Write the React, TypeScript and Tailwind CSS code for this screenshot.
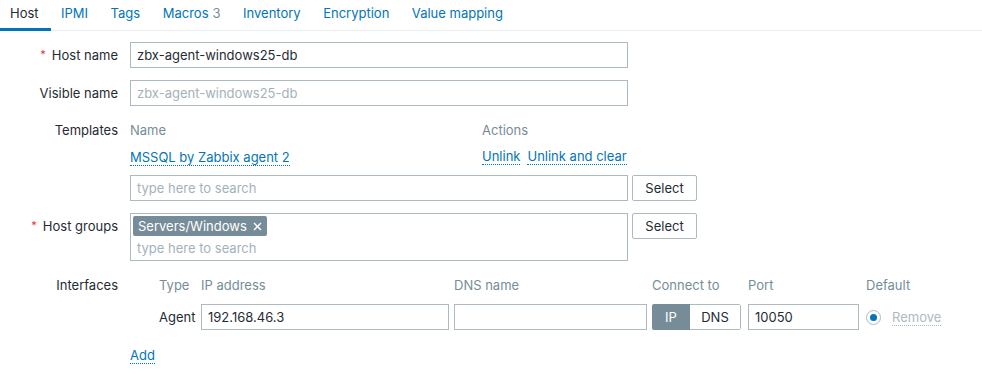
import React from 'react';

// --- couleurs Zabbix ---
// texte #1f2c33, liens #0275b8, en-têtes #768d99, bordures #acbbc2

const tabs = ['Host', 'IPMI', 'Tags', 'Macros', 'Inventory', 'Encryption', 'Value mapping'];

const Label = ({ text, required }: { text: string; required?: boolean }) => (
    <div className="flex justify-end items-start text-right text-[#1f2c33]">
        {required && <span className="text-[#e33734] text-[11px] mr-[6px] leading-[13px] mt-[1px]">*</span>}
        <span>{text}</span>
    </div>
);

const TextInput = ({ value, placeholder, className }: { value?: string; placeholder?: string; className?: string }) => (
    <div className={`h-[26px] border border-[#acbbc2] bg-white flex items-center px-[6px] ${className || ''}`}>
        {value ? <span className="text-[#1f2c33]">{value}</span> : <span className="text-[#a4b2ba]">{placeholder}</span>}
    </div>
);

const SelectBtn = () => (
    <button className="h-[26px] w-[65px] border border-[#acbbc2] rounded-[2px] bg-white text-[#1f2c33] flex items-center justify-center">
        Select
    </button>
);

const Link = ({ children, muted }: { children: React.ReactNode; muted?: boolean }) => (
    <span className={`border-b border-dotted leading-[15px] ${muted ? 'text-[#acbbc2] border-[#acbbc2]' : 'text-[#0275b8] border-[#0275b8]'}`}>
        {children}
    </span>
);

export default function App() {
    return (
        <div className="w-[982px] h-[374px] bg-white text-[13px] leading-[16px] overflow-hidden" style={{ fontFamily: 'Inter, "Noto Sans", sans-serif' }}>
            {/* ONGLETS */}
            <div className="flex h-[31px] border-b border-[#ebeef0]">
                {tabs.map((t, i) => (
                    <div
                        key={t}
                        className={`pl-[10px] pr-[12.5px] pt-[5px] h-[31px] ${i === 0 ? 'text-[#1f2c33] border-b-[3px] border-[#0275b8]' : 'text-[#0275b8]'}`}
                    >
                        {t}
                        {t === 'Macros' && <span className="text-[#768d99] ml-[4px]">3</span>}
                    </div>
                ))}
            </div>

            {/* FORMULAIRE */}
            <div className="grid grid-cols-[118px_1fr] gap-x-[12px] mt-[11px]">
                {/* Host name */}
                <div className="pt-[5px]"><Label text="Host name" required /></div>
                <TextInput value="zbx-agent-windows25-db" className="w-[498px]" />

                {/* Visible name */}
                <div className="pt-[5px] mt-[12px]"><Label text="Visible name" /></div>
                <TextInput placeholder="zbx-agent-windows25-db" className="w-[498px] mt-[12px]" />

                {/* Templates */}
                <div className="mt-[12px] pt-[4px]"><Label text="Templates" /></div>
                <div className="mt-[12px]">
                    <div className="grid grid-cols-[352px_1fr] h-[24px] items-center text-[#768d99]">
                        <span>Name</span>
                        <span>Actions</span>
                    </div>
                    <div className="grid grid-cols-[352px_1fr] h-[30px] items-center">
                        <span><Link>MSSQL by Zabbix agent 2</Link></span>
                        <span className="flex gap-[7px]"><Link>Unlink</Link><Link>Unlink and clear</Link></span>
                    </div>
                    <div className="flex gap-[4px] mt-[3px]">
                        <TextInput placeholder="type here to search" className="w-[498px]" />
                        <SelectBtn />
                    </div>
                </div>

                {/* Host groups */}
                <div className="mt-[12px] pt-[5px]"><Label text="Host groups" required /></div>
                <div className="mt-[12px] flex gap-[4px]">
                    <div className="w-[498px] h-[48px] border border-[#acbbc2] px-[2px] pt-[2px]">
                        <span className="inline-flex items-center h-[20px] bg-[#768d99] text-white rounded-[2px] px-[5px]">
                            Servers/Windows
                            <svg width="9" height="9" viewBox="0 0 9 9" className="ml-[6px]">
                                <path d="M1 1 L8 8 M8 1 L1 8" stroke="white" strokeWidth="1.4" />
                            </svg>
                        </span>
                        <div className="text-[#a4b2ba] px-[4px] mt-[4px]">type here to search</div>
                    </div>
                    <SelectBtn />
                </div>

                {/* Interfaces */}
                <div className="mt-[12px] pt-[4px]"><Label text="Interfaces" /></div>
                <div className="mt-[12px]">
                    <div className="grid grid-cols-[37px_248px_193px_91px_111px_1fr] gap-x-[5px] pl-[29px] h-[24px] items-center text-[#768d99]">
                        <span>Type</span>
                        <span>IP address</span>
                        <span>DNS name</span>
                        <span>Connect to</span>
                        <span>Port</span>
                        <span className="pl-[2px]">Default</span>
                    </div>
                    <div className="grid grid-cols-[37px_248px_193px_91px_111px_1fr] gap-x-[5px] pl-[29px] mt-[7px] items-center">
                        <span className="text-[#1f2c33]">Agent</span>
                        <TextInput value="192.168.46.3" />
                        <TextInput />
                        <div className="flex h-[26px] w-[89px] rounded-[2px] overflow-hidden">
                            <div className="w-[38px] bg-[#768d99] text-white flex items-center justify-center">IP</div>
                            <div className="flex-1 border border-l-0 border-[#acbbc2] rounded-r-[2px] text-[#1f2c33] flex items-center justify-center">DNS</div>
                        </div>
                        <TextInput value="10050" />
                        <div className="flex items-center ml-[2px]">
                            <span className="w-[15px] h-[15px] rounded-full border border-[#acbbc2] flex items-center justify-center">
                                <span className="w-[7px] h-[7px] rounded-full bg-[#0275b8]" />
                            </span>
                            <span className="ml-[11px]"><Link muted>Remove</Link></span>
                        </div>
                    </div>
                    <div className="mt-[17px]">
                        <Link>Add</Link>
                    </div>
                </div>
            </div>
        </div>
    );
}
